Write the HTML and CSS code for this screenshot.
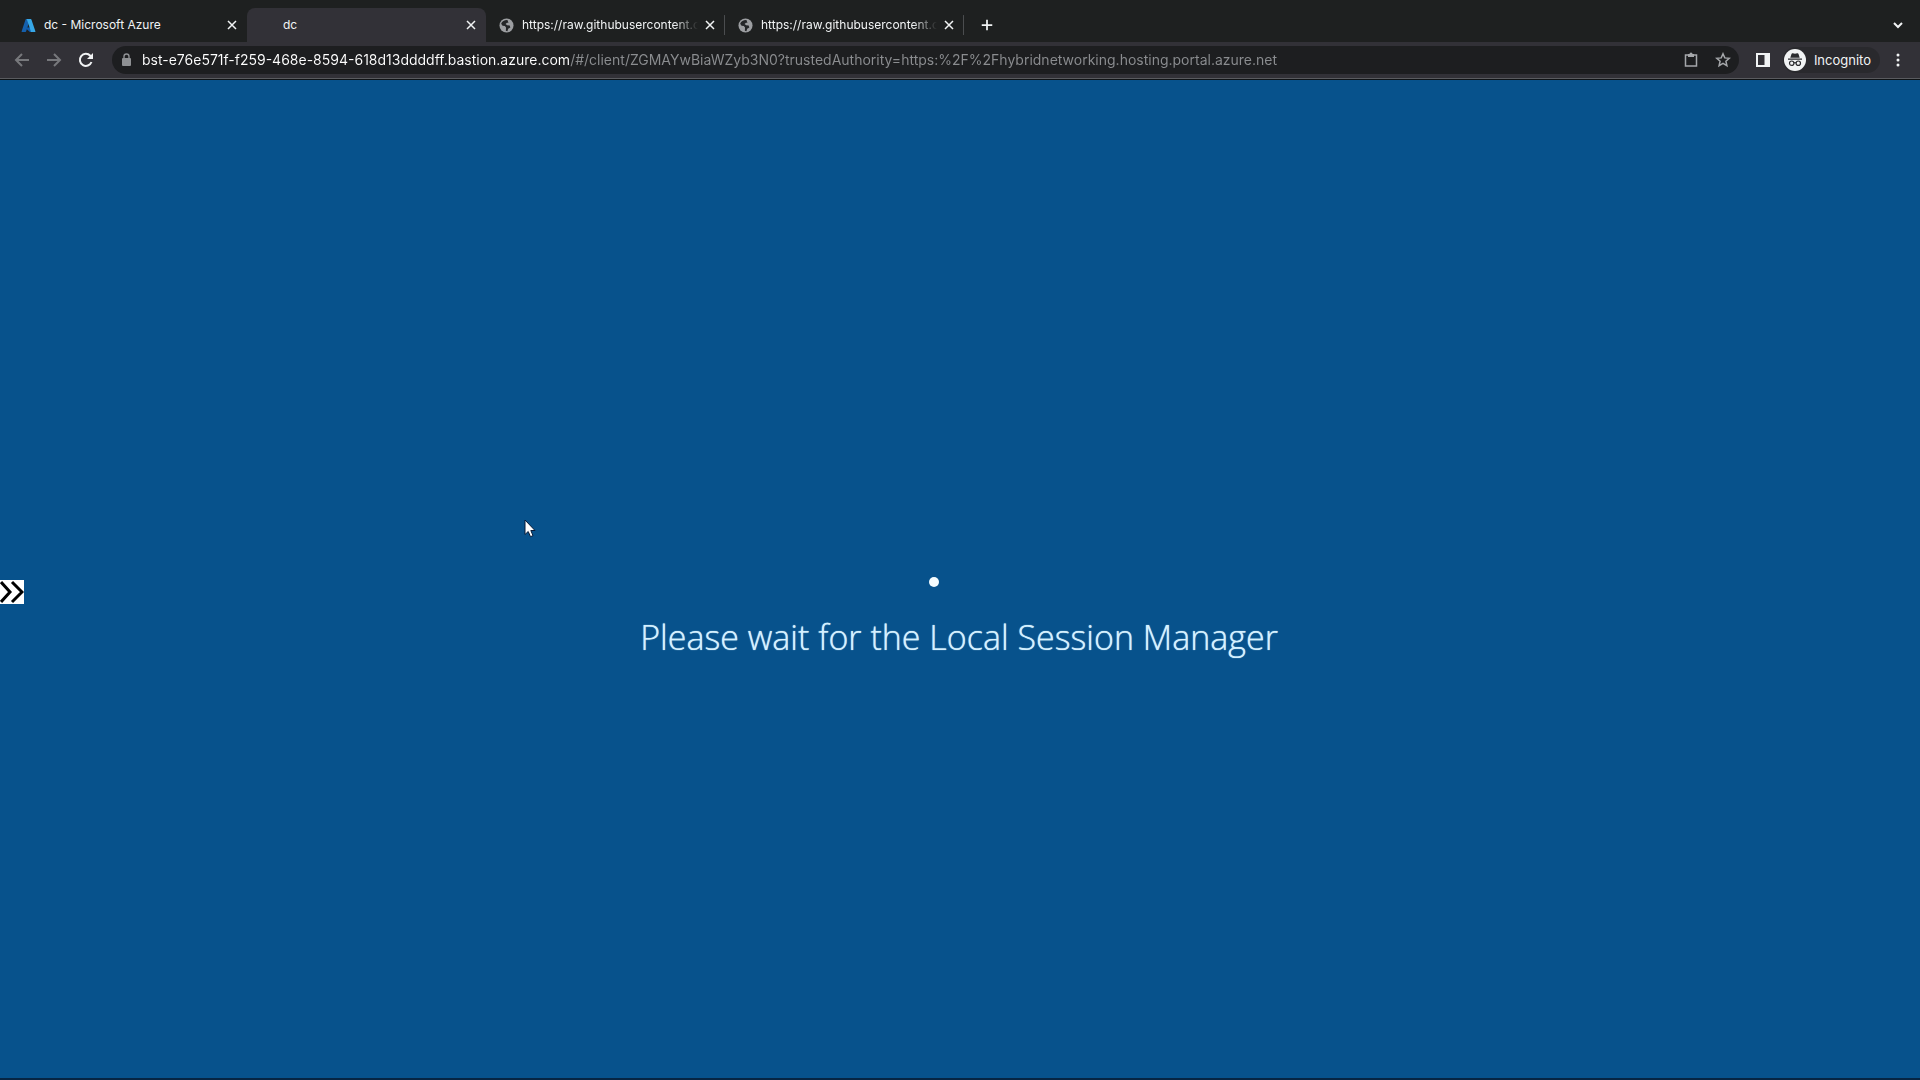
FILE: index.html
```html
<!DOCTYPE html>
<html lang="en">
<head>
<meta charset="utf-8">
<title>dc</title>
<link rel="stylesheet" href="styles.css">
</head>
<body>
<header class="browser">
  <nav class="tabs" aria-label="Tabs">
    <div class="tab">
      <svg class="tab-icon" viewBox="0 0 96 96" aria-hidden="true">
        <path fill="#1560ac" d="M33.3 6.5h26L32.300 87a4 4 0 0 1-4 3H8A4 4 0 0 1 4.200 84L29 9.500a4 4 0 0 1 4-3z"/>
        <path fill="#0f5cae" d="M71 60H30a2 2 0 0 0-1.300 3.300l26.500 25A4 4 0 0 0 58 90h23z"/>
        <path fill="#37a7e6" d="M66.600 9.400A4 4 0 0 0 62.800 6.500H34a4 4 0 0 1 3.800 2.900L62.800 84a4 4 0 0 1-4 6H88a4 4 0 0 0 4-6z"/>
      </svg>
      <a class="tab-title" href="#azure">dc - Microsoft Azure</a>
      <button class="tab-close" aria-label="Close tab"><svg viewBox="0 0 16 16"><path d="M4 4l8 8M12 4l-8 8"/></svg></button>
    </div>
    <div class="tab tab-active">
      <span class="tab-icon"></span>
      <a class="tab-title" href="#dc">dc</a>
      <button class="tab-close" aria-label="Close tab"><svg viewBox="0 0 16 16"><path d="M4 4l8 8M12 4l-8 8"/></svg></button>
    </div>
    <div class="tab tab-divided">
      <svg class="tab-icon" viewBox="0 0 16 16" aria-hidden="true">
        <circle cx="8" cy="8" r="7.500" fill="#9c9ea1"/>
        <path fill="#242628" d="M9 2.200C6 2 3.400 3.500 2.300 6l1.500 2.200 2.500.3 1.200 1.700-.2 3.500 1.700.3.800-2.600 2.300-1.300-.7-2-2.700-.5-1.700-1.200L8.500 5h1.600z"/>
      </svg>
      <a class="tab-title" href="#raw-1">https://raw.githubusercontent.c</a>
      <button class="tab-close" aria-label="Close tab"><svg viewBox="0 0 16 16"><path d="M4 4l8 8M12 4l-8 8"/></svg></button>
    </div>
    <div class="tab tab-divided">
      <svg class="tab-icon" viewBox="0 0 16 16" aria-hidden="true">
        <circle cx="8" cy="8" r="7.500" fill="#9c9ea1"/>
        <path fill="#242628" d="M9 2.200C6 2 3.400 3.500 2.300 6l1.500 2.200 2.500.3 1.200 1.700-.2 3.500 1.700.3.800-2.600 2.300-1.300-.7-2-2.700-.5-1.700-1.200L8.500 5h1.600z"/>
      </svg>
      <a class="tab-title" href="#raw-2">https://raw.githubusercontent.c</a>
      <button class="tab-close" aria-label="Close tab"><svg viewBox="0 0 16 16"><path d="M4 4l8 8M12 4l-8 8"/></svg></button>
    </div>
    <button class="tab-new" aria-label="New tab"><svg viewBox="0 0 16 16"><path d="M8 2v12M2 8h12"/></svg></button>
    <button class="tab-search" aria-label="Search tabs"><svg viewBox="0 0 16 16"><path d="M4 6l4 4 4-4"/></svg></button>
  </nav>
  <div class="toolbar">
    <div class="nav-buttons">
      <button class="icon-button dim" aria-label="Back"><svg viewBox="0 0 18 18"><path d="M16 9H3M9 3L3 9l6 6"/></svg></button>
      <button class="icon-button dim" aria-label="Forward"><svg viewBox="0 0 18 18"><path d="M2 9h13M9 3l6 6-6 6"/></svg></button>
      <button class="icon-button" aria-label="Reload"><svg viewBox="0 0 18 18"><path d="M14.500 11a6 6 0 1 1-1.200-6.200L15 6.500"/><path class="solid" d="M16 2v6h-6z"/></svg></button>
    </div>
    <div class="omnibox">
      <svg class="lock" viewBox="0 0 12 14" aria-hidden="true"><rect x="2" y="5" width="9" height="8" rx="1" fill="#8e9093"/><path d="M4 5V3.500a2.500 2.500 0 0 1 5 0V5" fill="none" stroke="#8e9093" stroke-width="1.400"/></svg>
      <input class="address" type="text" aria-label="Address" spellcheck="false" value="bst-e76e571f-f259-468e-8594-618d13ddddff.bastion.azure.com/#/client/ZGMAYwBiaWZyb3N0?trustedAuthority=https:%2F%2Fhybridnetworking.hosting.portal.azure.net">
      <button class="box-button" aria-label="Clipboard"><svg viewBox="0 0 16 16"><path d="M2.500 3h11v11h-11z"/><path class="solid" d="M5 2h1.500a1.500 1.500 0 0 1 3 0H11v3H5z"/></svg></button>
      <button class="box-button" aria-label="Bookmark"><svg viewBox="0 0 16 16"><path d="M8 1.800l1.800 4.100 4.400.4-3.300 2.900 1 4.400L8 11.300l-3.900 2.300 1-4.400-3.300-2.900 4.400-.4z"/></svg></button>
    </div>
    <button class="icon-button panel" aria-label="Side panel"><svg viewBox="0 0 16 16"><path class="solid" fill-rule="evenodd" d="M1 1h14v14H1zM3 3v10h6.500V3z"/></svg></button>
    <button class="profile">
      <svg viewBox="0 0 22 22" aria-hidden="true">
        <circle cx="11" cy="11" r="11" fill="#f1f3f4"/>
        <path fill="#2b2c2f" d="M7.500 5q.3-1 1.300-.8L11 4.800l2.200-.6q1-.2 1.300.8l1.200 3.700H6.300zM4 9.600h14v1.200H4z"/>
        <g fill="none" stroke="#2b2c2f" stroke-width="1.200"><circle cx="7.700" cy="14.200" r="2.200"/><circle cx="14.300" cy="14.200" r="2.200"/><path d="M9.900 14q1.100-.8 2.200 0"/></g>
      </svg>
      Incognito
    </button>
    <button class="icon-button menu" aria-label="Menu"><svg viewBox="0 0 16 16"><g class="solid"><circle cx="8" cy="3" r="1.500"/><circle cx="8" cy="8" r="1.500"/><circle cx="8" cy="13" r="1.500"/></g></svg></button>
  </div>
</header>
<main class="session">
  <button class="drawer" aria-label="Open session panel"><svg viewBox="0 0 24 24"><path d="M1 2l9 10-9 10M12 2l10 10-10 10"/></svg></button>
  <div class="status">
    <span class="spinner"></span>
    <p class="message">Please wait for the Local Session Manager</p>
  </div>
  <svg class="cursor" viewBox="0 0 12 19" aria-hidden="true"><path d="M1 1v14.500l3.200-3 2.300 5.200 2.500-1.100L6.800 11.500H11z" fill="#fff" stroke="#061a38"/></svg>
</main>
</body>
</html>
```
FILE: styles.css
```css
* { box-sizing: border-box; }

body {
  margin: 0;
  min-height: 100vh;
  display: flex;
  flex-direction: column;
  font-family: Inter, "Liberation Sans", sans-serif;
  font-size: 12px;
  color: #f1f3f4;
  background: #07528c;
}

button {
  display: flex;
  align-items: center;
  justify-content: center;
  flex: none;
  margin: 0;
  padding: 0;
  border: 0;
  background: none;
  color: inherit;
  font: inherit;
}

svg { display: block; flex: none; }

button svg {
  fill: none;
  stroke: currentColor;
  stroke-width: 2;
}

button .solid { fill: currentColor; stroke: none; }

.tabs {
  display: flex;
  align-items: flex-end;
  height: 42px;
  padding: 0 8px;
  background: #1e2020;
}

.tab {
  display: flex;
  align-items: center;
  flex: 0 1 239px;
  min-width: 0;
  height: 34px;
  padding: 0 7px 0 13px;
  border-radius: 8px 8px 0 0;
}

.tab-active { background: #323137; }

.tab-divided {
  background: linear-gradient(#4b4d4f, #4b4d4f) right center / 1px 20px no-repeat;
}

.tab-icon { width: 15px; height: 15px; margin-right: 8px; flex: none; }

.tab-title {
  flex: 1;
  min-width: 0;
  overflow: hidden;
  white-space: nowrap;
  color: inherit;
  font-weight: 400;
  line-height: 16px;
  text-decoration: none;
}

.tab-divided .tab-title {
  mask-image: linear-gradient(to left, transparent 4px, #000 28px);
}

.tab-close, .tab-close svg { width: 16px; height: 16px; }

.tab-close svg { stroke-width: 1.500; }

.tab-new { width: 46px; height: 34px; }

.tab-new svg { width: 14px; height: 14px; }

.tab-search { width: 28px; height: 34px; margin-left: auto; }

.tab-search svg { width: 16px; height: 16px; }

.toolbar {
  display: flex;
  align-items: center;
  height: 38px;
  padding: 0 8px 2px 6px;
  background: #323137;
  border-bottom: 1px solid #101315;
  box-shadow: inset 0 -1px #5a5b5f;
}

.nav-buttons { display: flex; width: 106px; }

.icon-button { width: 32px; height: 28px; }

.icon-button svg { width: 18px; height: 18px; }

.dim { color: #77787c; }

.omnibox {
  display: flex;
  align-items: center;
  flex: 1;
  min-width: 0;
  height: 28px;
  padding: 0 0 0 8px;
  border-radius: 14px;
  background: #1d1e20;
}

.lock { width: 12px; height: 14px; margin-right: 10px; }

.address {
  flex: 1;
  min-width: 0;
  height: 20px;
  padding: 0;
  border: 0;
  outline: 0;
  font: 400 14px/20px Inter, "Liberation Sans", sans-serif;
  color: transparent;
  background: linear-gradient(to right, #fff 428px, #8b8d90 428px);
  background-clip: text;
}

.box-button { width: 32px; height: 28px; color: #a5a7aa; }

.box-button svg { width: 16px; height: 16px; stroke-width: 1.500; }

.panel { width: 40px; margin-left: 4px; }

.panel svg { width: 16px; height: 16px; }

.menu svg { width: 16px; height: 16px; }

.profile {
  gap: 8px;
  height: 26px;
  padding: 0 9px 0 1px;
  border-radius: 13px;
  background: #29292d;
  font-size: 13px;
  font-weight: 400;
}

.profile svg { width: 22px; height: 22px; stroke: none; }

.menu { width: 28px; margin-left: 4px; }

.session {
  position: relative;
  display: flex;
  align-items: center;
  flex: 1;
  border-bottom: 2px solid #062543;
}

.drawer {
  width: 24px;
  height: 24px;
  margin-top: 26px;
  background: #fff;
  color: #000;
}

.drawer svg { width: 24px; height: 24px; stroke-width: 3; }

.status {
  display: flex;
  flex-direction: column;
  align-items: center;
  flex: 1;
  gap: 26px;
  margin-top: 80px;
  padding-right: 26px;
}

.spinner {
  width: 10px;
  height: 10px;
  margin-right: 50px;
  border-radius: 50%;
  background: #f4fcff;
}

.message {
  margin: 0;
  color: #d5f1ff;
  font: 350 34px/48px "Open Sans", "Noto Sans", sans-serif;
  text-shadow: 0 0 1px #d5f1ff;
}

.cursor {
  position: absolute;
  left: 524px;
  top: 439px;
  width: 12px;
  height: 19px;
}
```
